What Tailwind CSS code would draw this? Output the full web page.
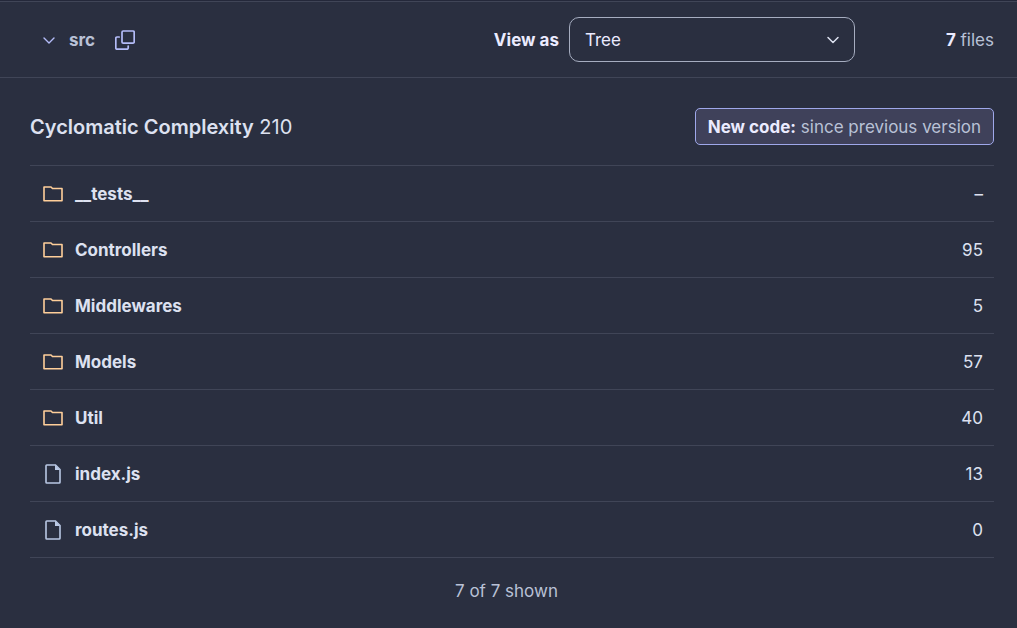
<!DOCTYPE html>
<html lang="en">
<head>
<meta charset="utf-8">
<meta name="viewport" content="width=device-width, initial-scale=1">
<title>src – Cyclomatic Complexity</title>
<script src="https://cdn.jsdelivr.net/npm/@tailwindcss/browser@4"></script>
</head>
<body class="min-h-screen bg-[#2a2f40] font-['Inter',sans-serif] text-[17px] leading-6 text-[#dde1f0]">
<svg class="hidden" aria-hidden="true">
  <symbol id="folder" viewBox="0 0 20 16"><path d="M1 1H8L9.5 2.5H19V14.8H1Z" fill="none" stroke="currentColor" stroke-width="1.6" stroke-linejoin="round"/></symbol>
  <symbol id="file" viewBox="0 0 16 20"><path d="M1.8 1H10.5L15 5.5V18.2Q15 19 14.2 19H1.8Q1 19 1 18.2V1.8Q1 1 1.8 1Z" fill="none" stroke="currentColor" stroke-width="1.6"/><path d="M10 1V6H15Z" fill="currentColor"/></symbol>
</svg>
<div class="border-t border-[#24283a]">
<header class="flex h-[77px] items-center border-t border-b border-[#404557] pr-[23px] pl-[41px]">
  <button type="button" class="flex items-center gap-3 font-bold text-[#b9c1d6]">
    <svg class="h-4 w-4 text-[#b4bcf8]" viewBox="0 0 16 16" fill="none" stroke="currentColor" stroke-width="1.4" stroke-linecap="round" stroke-linejoin="round" aria-hidden="true"><path d="M3 6L8 11L13 6"/></svg>
    src
  </button>
  <button type="button" aria-label="Copy path" class="ml-5 text-[#b4bcf8]">
    <svg class="h-5 w-5" viewBox="0 0 20 20" fill="none" stroke="currentColor" stroke-width="1.7" stroke-linecap="round" aria-hidden="true"><rect x="7" y="1" width="12.2" height="12.2" rx="1.2"/><path d="M4.2 7H2Q.8 7 .8 8.2V18Q.8 19.2 2 19.2H12Q13.2 19.2 13.2 18V16"/></svg>
  </button>
  <label for="view" class="mr-[10px] ml-auto font-bold text-[#ebebff]">View as</label>
  <div class="grid w-[286px] items-center">
    <select id="view" class="col-start-1 row-start-1 h-[45px] w-full appearance-none rounded-[10px] border border-[#a6adc0] bg-transparent px-[15px] text-[#ebebff]"><option>Tree</option></select>
    <svg class="pointer-events-none col-start-1 row-start-1 mr-[14px] h-4 w-4 justify-self-end text-[#dde1f0]" viewBox="0 0 16 16" fill="none" stroke="currentColor" stroke-width="1.5" stroke-linecap="round" stroke-linejoin="round" aria-hidden="true"><path d="M3 5.5L8 10.5L13 5.5"/></svg>
  </div>
  <p class="ml-[91px] text-[#b9c1d6]"><strong class="font-bold text-[#ebebff]">7</strong> files</p>
</header>
</div>
<main class="pt-[30px] pr-[23px] pl-[30px]">
  <div class="mb-5 flex items-center justify-between">
    <h1 class="text-xl"><span class="font-semibold">Cyclomatic Complexity</span> 210</h1>
    <p class="rounded-[5px] border border-[#9fa8ea] bg-[#3f415a] px-3 pt-[6px] pb-1 leading-[25px] text-[#b9c1d6]"><strong class="font-bold text-[#ebebff]">New code:</strong> since previous version</p>
  </div>
  <table class="w-full border-separate border-spacing-0 border-t border-[#404557] [&_a]:font-bold [&_td]:h-14 [&_td]:border-b [&_td]:border-[#404557] [&_td:first-child]:w-[45px] [&_td:first-child]:pl-[13px] [&_td:last-child]:pr-[11px] [&_td:last-child]:text-right">
    <tbody>
      <tr><td><svg class="h-4 w-5 text-[#ffcf9a]" aria-hidden="true"><use href="#folder"/></svg></td><td><a href="#">__tests__</a></td><td>–</td></tr>
      <tr><td><svg class="h-4 w-5 text-[#ffcf9a]" aria-hidden="true"><use href="#folder"/></svg></td><td><a href="#">Controllers</a></td><td>95</td></tr>
      <tr><td><svg class="h-4 w-5 text-[#ffcf9a]" aria-hidden="true"><use href="#folder"/></svg></td><td><a href="#">Middlewares</a></td><td>5</td></tr>
      <tr><td><svg class="h-4 w-5 text-[#ffcf9a]" aria-hidden="true"><use href="#folder"/></svg></td><td><a href="#">Models</a></td><td>57</td></tr>
      <tr><td><svg class="h-4 w-5 text-[#ffcf9a]" aria-hidden="true"><use href="#folder"/></svg></td><td><a href="#">Util</a></td><td>40</td></tr>
      <tr><td><svg class="h-5 w-5 text-[#b9c8e4]" aria-hidden="true"><use href="#file"/></svg></td><td><a href="#">index.js</a></td><td>13</td></tr>
      <tr><td><svg class="h-5 w-5 text-[#b9c8e4]" aria-hidden="true"><use href="#file"/></svg></td><td><a href="#">routes.js</a></td><td>0</td></tr>
    </tbody>
  </table>
  <p class="mt-[21px] pr-[11px] text-center text-[#b9c1d6]" role="status">7 of 7 shown</p>
</main>
</body>
</html>
